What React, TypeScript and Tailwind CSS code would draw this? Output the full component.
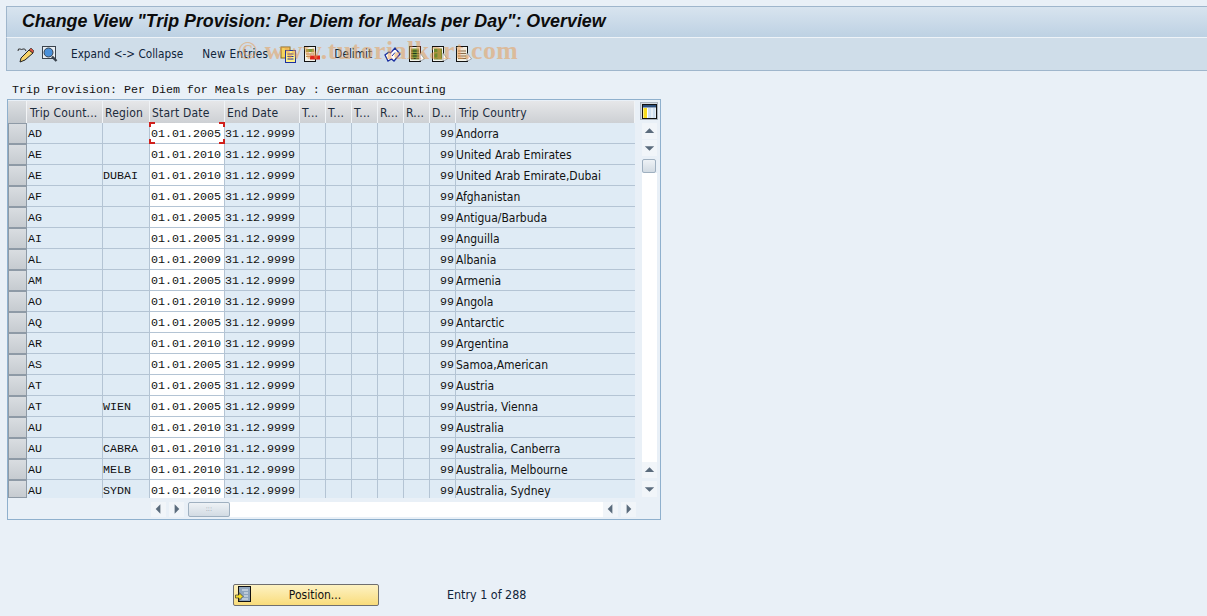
const uiFont = "font-['DejaVu_Sans_Condensed','Noto_Sans',sans-serif]";
const monoFont = "font-['Liberation_Mono',monospace]";

const rows = [
  ["AD", "", "01.01.2005", "Andorra"],
  ["AE", "", "01.01.2010", "United Arab Emirates"],
  ["AE", "DUBAI", "01.01.2010", "United Arab Emirate,Dubai"],
  ["AF", "", "01.01.2005", "Afghanistan"],
  ["AG", "", "01.01.2005", "Antigua/Barbuda"],
  ["AI", "", "01.01.2005", "Anguilla"],
  ["AL", "", "01.01.2009", "Albania"],
  ["AM", "", "01.01.2005", "Armenia"],
  ["AO", "", "01.01.2010", "Angola"],
  ["AQ", "", "01.01.2005", "Antarctic"],
  ["AR", "", "01.01.2010", "Argentina"],
  ["AS", "", "01.01.2005", "Samoa,American"],
  ["AT", "", "01.01.2005", "Austria"],
  ["AT", "WIEN", "01.01.2005", "Austria, Vienna"],
  ["AU", "", "01.01.2010", "Australia"],
  ["AU", "CABRA", "01.01.2010", "Australia, Canberra"],
  ["AU", "MELB", "01.01.2010", "Australia, Melbourne"],
  ["AU", "SYDN", "01.01.2010", "Australia, Sydney"],
];

const headers = [
  ["Trip Count...", "w-[76px] pl-[3px]"],
  ["Region", "w-[47px] pl-[2px]"],
  ["Start Date", "w-[75px] pl-[2px]"],
  ["End Date", "w-[75px] pl-[2px]"],
  ["T...", "w-[26px] pl-[2px]"],
  ["T...", "w-[26px] pl-[2px]"],
  ["T...", "w-[26px] pl-[2px]"],
  ["R...", "w-[26px] pl-[2px]"],
  ["R...", "w-[26px] pl-[2px]"],
  ["D...", "w-[26px] pl-[2px]"],
  ["Trip Country", "w-[179px] pl-[3px]"],
];

const EditIcon = () => (
  <svg width="17" height="17" viewBox="0 0 17 17">
    <path d="M4 12 L12 4 L16 7 L8 14 L3 16 Z" fill="#f6d36a" stroke="#222" strokeWidth="1" />
    <path d="M12 4 L14 2 L17 5 L16 7 Z" fill="#d9543f" stroke="#222" strokeWidth="0.600" />
    <path d="M1 5 Q1 2 3 3 T6 3 Q8 2 9 5" fill="none" stroke="#333" strokeWidth="1" />
  </svg>
);

const DisplayIcon = () => (
  <svg width="17" height="17" viewBox="0 0 17 17">
    <rect x="1.500" y="0.500" width="13" height="12" fill="#e8eef4" stroke="#39424c" />
    <circle cx="7.500" cy="6.500" r="4.500" fill="#4a90d9" stroke="#39424c" />
    <path d="M11 10.500 L15.500 15" stroke="#39424c" strokeWidth="2.400" />
  </svg>
);

const CopyIcon = () => (
  <svg width="16" height="17" viewBox="0 0 16 17">
    <rect x="1" y="1" width="9" height="11" fill="#f4d35e" stroke="#8a6d1f" />
    <rect x="5.500" y="4.500" width="10" height="12" fill="#fdf08a" stroke="#1b2fa0" />
    <path d="M7.500 8h6M7.500 10.500h6M7.500 13h6" stroke="#1b2fa0" />
  </svg>
);

const DeleteRowIcon = () => (
  <svg width="17" height="17" viewBox="0 0 17 17">
    <rect x="1.500" y="0.500" width="11" height="15" fill="#f2f2ea" stroke="#111" />
    <rect x="3" y="3" width="8" height="3" fill="#7f9a3c" />
    <path d="M3 8h8M3 10.500h8" stroke="#b88a5c" />
    <rect x="7" y="9.500" width="10" height="4" fill="#e0231b" />
  </svg>
);

const UndoIcon = () => (
  <svg width="17" height="17" viewBox="0 0 17 17">
    <path d="M1 9 L4 15 L7.500 13 L10 15 L16 8 L11 2 L6.500 7 L5 6 Z" fill="#fff" stroke="#1b2fa0" strokeWidth="1.300" />
    <path d="M8 10 L11 6.500" stroke="#1b2fa0" />
  </svg>
);

const ListIcon = ({ fill, line }: { fill: string; line: string }) => (
  <svg width="17" height="17" viewBox="0 0 17 17">
    <rect x="1.500" y="0.500" width="11" height="15" fill="#f2f2ea" stroke="#111" />
    <rect x="3" y="2.500" width="8" height="11" fill={fill} />
    <path d="M3 5h8M3 7.500h8M3 10h8M3 12.500h8" stroke={line} />
    <path d="M12 7 L12 15 L16.500 13 Z" fill="#fff" stroke="#777" strokeWidth="0.600" />
  </svg>
);

const ColumnsIcon = () => (
  <svg width="15" height="15" viewBox="0 0 15 15">
    <rect x="0.500" y="0.500" width="14" height="14" fill="#fff" stroke="#111" />
    <rect x="1" y="1" width="13" height="2.500" fill="#2a4f7c" />
    <rect x="1.500" y="4" width="3.500" height="10" fill="#f7dc1e" />
    <rect x="6" y="4" width="3.500" height="10" fill="#cfe0f0" />
    <rect x="10.500" y="4" width="3" height="10" fill="#cfe0f0" />
  </svg>
);

const PositionIcon = () => (
  <svg width="16" height="17" viewBox="0 0 16 17">
    <rect x="3.500" y="0.500" width="12" height="15" fill="#8fa5bd" stroke="#111" />
    <path d="M7 4h6M9 7h4M9 10h4M7 13h6" stroke="#e8eef4" />
    <path d="M0.500 9 H4 V6.500 L8 10.500 L4 14.500 V12 H0.500 Z" fill="#f5dc28" stroke="#333" strokeWidth="0.700" />
  </svg>
);

// small square scroll button with a triangle in it
const ArrowButton = ({ dir, size = "w-[16px] h-[16px]" }: { dir: "up" | "down" | "left" | "right"; size?: string }) => {
  const shapes = {
    up: "M3 10 L8 5 L13 10 Z",
    down: "M3 6 L8 11 L13 6 Z",
    left: "M10 3 L5 8 L10 13 Z",
    right: "M6 3 L11 8 L6 13 Z",
  };
  return (
    <div className={`${size} flex shrink-0 items-center justify-center bg-[#f1f5f9]`}>
      <svg width="16" height="16" viewBox="0 0 16 16">
        <path d={shapes[dir]} fill="#5a6b7c" />
      </svg>
    </div>
  );
};

const Corner = ({ className }: { className: string }) => (
  <div className={`absolute h-[5px] w-[6px] border-[#d0201c] ${className}`} />
);

export default function App() {
  return (
    <div className={`relative h-[616px] w-[1207px] overflow-hidden bg-[#e9f0f7] pt-[6px] pl-[6px] ${uiFont}`}>
      {/* Title bar */}
      <div className="flex h-[31px] items-center border-t border-l border-[#9fb6cc] bg-gradient-to-b from-[#d8e4ef] to-[#bdd1e3] pl-[15px]">
        <h1 className="font-['Liberation_Sans',sans-serif] text-[17.84px] leading-none font-bold text-[#0c0c0c] italic">
          Change View "Trip Provision: Per Diem for Meals per Day": Overview
        </h1>
      </div>

      {/* Toolbar */}
      <div className="flex h-[34px] items-center border-t border-b border-l border-t-[#eef3f8] border-b-[#9fb6cc] border-l-[#9fb6cc] bg-[#cfdde9] pl-[10px] text-[11.7px] text-[#10243a]">
        <EditIcon />
        <div className="ml-[7px]"><DisplayIcon /></div>
        <span className="mt-[2px] ml-[13px]">Expand &lt;-&gt; Collapse</span>
        <span className="mt-[2px] ml-[19px] tracking-[0.3px]">New Entries</span>
        <div className="ml-[12px]"><CopyIcon /></div>
        <div className="ml-[7px]"><DeleteRowIcon /></div>
        <span className="mt-[2px] ml-[14px]">Delimit</span>
        <div className="ml-[12px]"><UndoIcon /></div>
        <div className="ml-[7px]"><ListIcon fill="#7f9a3c" line="#1f3d1a" /></div>
        <div className="ml-[6px]"><ListIcon fill="#6f8c2c" line="#6f8c2c" /></div>
        <div className="ml-[7px]"><ListIcon fill="#f2e4d0" line="#8a6d4c" /></div>
      </div>

      {/* Screen title */}
      <p className={`mt-[12px] ml-[6px] h-[15px] text-[11.67px] leading-[15px] text-[#111] ${monoFont}`}>
        Trip Provision: Per Diem for Meals per Day : German accounting
      </p>

      {/* Table control */}
      <div className="mt-[1px] ml-[1px] flex h-[421px] w-[654px] border border-[#8fb0cd] bg-[#e9f0f7]">
        <div className="flex w-[628px] flex-col pt-[1px]">
          <div className="flex h-[22px] text-[12px] text-[#1c2c3c]">
            <div className="w-[19px] border-r border-[#f2f4f6] bg-gradient-to-b from-[#dcdfe2] to-[#c3c8cd]" />
            {headers.map(([label, width], i) => (
              <div
                key={i}
                className={`${width} flex items-center border-r border-[#f0f3f6] bg-gradient-to-b from-[#e6e7e9] to-[#cdd0d4] pt-[2px] tracking-[0.2px] whitespace-nowrap`}
              >
                {label}
              </div>
            ))}
          </div>

          {rows.map(([country, region, start, name], i) => {
            const last = i === rows.length - 1;
            const lines = last ? "border-r" : "border-r border-b";
            const lineColor = "border-[#b4c4d4] bg-[#dfebf5]";
            const mono = `text-[11.67px] leading-[23px] ${monoFont}`;
            return (
              <div key={i} className={`flex text-[#111] ${last ? "h-[18px]" : "h-[21px]"}`}>
                <div className="w-[19px] border border-[#8e9aa6] bg-gradient-to-b from-[#d9dde1] to-[#c6cbd0]" />
                <div className={`w-[76px] pl-[1px] ${lines} ${lineColor} ${mono}`}>{country}</div>
                <div className={`w-[47px] ${lines} ${lineColor} ${mono}`}>{region}</div>
                <div className={`relative w-[75px] bg-white pl-[1px] ${lines} border-[#b4c4d4] ${mono}`}>
                  {start}
                  {i === 0 && (
                    <>
                      <Corner className="-top-[1px] -left-[1px] border-t-2 border-l-2" />
                      <Corner className="-top-[1px] -right-[1px] border-t-2 border-r-2" />
                      <Corner className="-bottom-[1px] -left-[1px] border-b-2 border-l-2" />
                      <Corner className="-right-[1px] -bottom-[1px] border-r-2 border-b-2" />
                    </>
                  )}
                </div>
                <div className={`w-[75px] ${lines} ${lineColor} ${mono}`}>31.12.9999</div>
                <div className={`w-[26px] ${lines} ${lineColor}`} />
                <div className={`w-[26px] ${lines} ${lineColor}`} />
                <div className={`w-[26px] ${lines} ${lineColor}`} />
                <div className={`w-[26px] ${lines} ${lineColor}`} />
                <div className={`w-[26px] ${lines} ${lineColor}`} />
                <div className={`w-[26px] pr-[1px] text-right ${lines} ${lineColor} ${mono}`}>99</div>
                <div className={`w-[179px] text-[12px] leading-[23px] whitespace-nowrap ${last ? "" : "border-b"} ${lineColor}`}>{name}</div>
              </div>
            );
          })}

          {/* Horizontal scroll bar */}
          <div className="mt-[3px] ml-[143px] flex h-[16px] items-center">
            <ArrowButton dir="left" size="w-[15px] h-[15px]" />
            <div className="ml-[3px]"><ArrowButton dir="right" size="w-[15px] h-[15px]" /></div>
            <div className="ml-[4px] flex h-[15px] w-[42px] items-center justify-center rounded-[2px] border border-[#9fb0c0] bg-gradient-to-b from-[#eef2f6] to-[#d2dbe3] text-[7px] leading-none text-[#8a97a4]">
              :::
            </div>
            <div className="h-[15px] w-[375px] bg-white" />
            <ArrowButton dir="left" size="w-[15px] h-[15px]" />
            <div className="ml-[3px]"><ArrowButton dir="right" size="w-[15px] h-[15px]" /></div>
          </div>
        </div>

        {/* Vertical scroll bar */}
        <div className="flex w-[24px] flex-col items-center pt-[2px] pl-[2px]">
          <div className="flex h-[18px] w-[18px] items-center justify-center border border-[#aab4be] bg-[#d5dbe1]">
            <ColumnsIcon />
          </div>
          <div className="mt-[3px]"><ArrowButton dir="up" size="w-[15px] h-[16px]" /></div>
          <div className="mt-[1px]"><ArrowButton dir="down" size="w-[15px] h-[16px]" /></div>
          <div className="mt-[3px] h-[14px] w-[14px] rounded-[2px] border border-[#9fb0c0] bg-gradient-to-b from-[#eef2f6] to-[#d2dbe3]" />
          <div className="h-[289px] w-[15px] bg-white" />
          <ArrowButton dir="up" size="w-[15px] h-[16px]" />
          <div className="mt-[3px]"><ArrowButton dir="down" size="w-[15px] h-[16px]" /></div>
        </div>
      </div>

      {/* Footer with position button */}
      <div className="mt-[64px] ml-[227px] flex items-center text-[12.4px] text-[#10243a]">
        <button className="relative flex h-[22px] w-[146px] items-center justify-center rounded-[2px] border border-[#6f6f6f] bg-gradient-to-b from-[#fdf2c2] to-[#f9dc7a] pl-[18px] text-[12px] text-[#111]">
          <span className="absolute top-[1px] left-[1px]"><PositionIcon /></span>
          Position...
        </button>
        <span className="ml-[68px]">Entry 1 of 288</span>
      </div>

      {/* Watermark */}
      <div className="absolute top-[36px] left-[238px] font-['Liberation_Serif',serif] text-[25.8px] leading-[30px] font-bold tracking-[0.5px] whitespace-nowrap text-[#e89a50] opacity-50">
        © www.tutorialkart.com
      </div>
    </div>
  );
}
